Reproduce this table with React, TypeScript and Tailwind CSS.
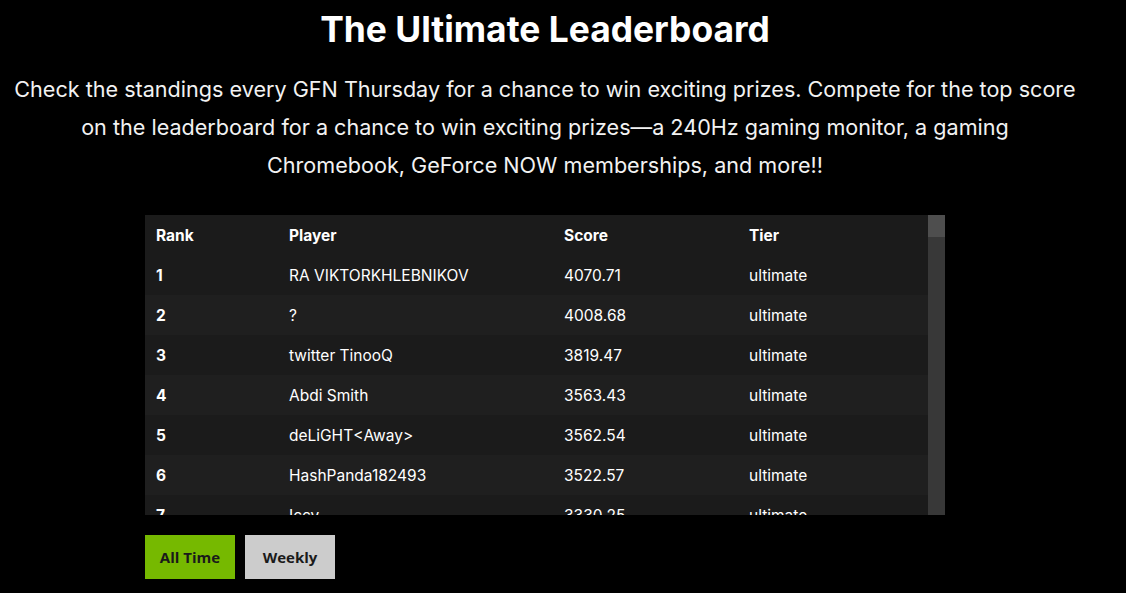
import { useState } from 'react';

const rows = [
  { rank: 1, player: 'RA VIKTORKHLEBNIKOV', score: '4070.71', tier: 'ultimate' },
  { rank: 2, player: '?', score: '4008.68', tier: 'ultimate' },
  { rank: 3, player: 'twitter TinooQ', score: '3819.47', tier: 'ultimate' },
  { rank: 4, player: 'Abdi Smith', score: '3563.43', tier: 'ultimate' },
  { rank: 5, player: 'deLiGHT<Away>', score: '3562.54', tier: 'ultimate' },
  { rank: 6, player: 'HashPanda182493', score: '3522.57', tier: 'ultimate' },
  { rank: 7, player: 'Iccy', score: '3330.25', tier: 'ultimate' },
  { rank: 8, player: 'Kaizen', score: '3301.12', tier: 'ultimate' },
];

export default function App() {
  const [tab, setTab] = useState<'all' | 'weekly'>('all');

  return (
    <div className="min-h-screen w-[1126px] h-[593px] bg-black text-white overflow-hidden">
      <div className="w-[1090px] flex flex-col items-center font-['Inter',sans-serif]">
        <h1 className="mt-[10px] text-[35.4px] leading-[40px] font-bold">
          The Ultimate Leaderboard
        </h1>
        <p className="mt-[20px] text-center text-[21.6px] leading-[38px] text-[#f2f2f2]">
          Check the standings every GFN Thursday for a chance to win exciting prizes. Compete for the top score
          <br />
          on the leaderboard for a chance to win exciting prizes—a 240Hz gaming monitor, a gaming
          <br />
          Chromebook, GeForce NOW memberships, and more!!
        </p>
      </div>

      <div className="ml-[145px] mt-[31px] w-[800px] flex flex-col font-['Inter',sans-serif]">
        <div className="flex h-[300px]">
          <div className="w-[783px] h-[300px] overflow-hidden">
            <table className="w-full border-collapse text-[15.5px]">
              <thead>
                <tr className="h-[40px] bg-[#1b1b1b] text-left">
                  <th className="w-[133px] pl-[11px] pt-[2px] font-bold">Rank</th>
                  <th className="w-[275px] pl-[11px] pt-[2px] font-bold">Player</th>
                  <th className="w-[185px] pl-[11px] pt-[2px] font-bold">Score</th>
                  <th className="pl-[11px] pt-[2px] font-bold">Tier</th>
                </tr>
              </thead>
              <tbody>
                {rows.map((r, i) => (
                  <tr key={r.rank} className={`h-[40px] ${i % 2 === 0 ? 'bg-[#1b1b1b]' : 'bg-[#1f1f1f]'}`}>
                    <td className="pl-[11px] pt-[2px] font-bold">{r.rank}</td>
                    <td className="pl-[11px] pt-[2px]">{r.player}</td>
                    <td className="pl-[11px] pt-[2px]">{r.score}</td>
                    <td className="pl-[11px] pt-[2px]">{r.tier}</td>
                  </tr>
                ))}
              </tbody>
            </table>
          </div>
          <div className="w-[17px] h-[300px] bg-[#383838] flex flex-col">
            <div className="h-[22px] bg-[#4e4e4e]" />
          </div>
        </div>

        <div className="mt-[20px] flex gap-[10px] font-['Open_Sans',sans-serif]">
          <button
            onClick={() => setTab('all')}
            className={`w-[90px] h-[44px] text-[15px] font-bold text-[#1a1a1a] ${tab === 'all' ? 'bg-[#76b900]' : 'bg-[#cccccc]'}`}
          >
            All Time
          </button>
          <button
            onClick={() => setTab('weekly')}
            className={`w-[90px] h-[44px] text-[15px] font-bold text-[#1a1a1a] ${tab === 'weekly' ? 'bg-[#76b900]' : 'bg-[#cccccc]'}`}
          >
            Weekly
          </button>
        </div>
      </div>
    </div>
  );
}
